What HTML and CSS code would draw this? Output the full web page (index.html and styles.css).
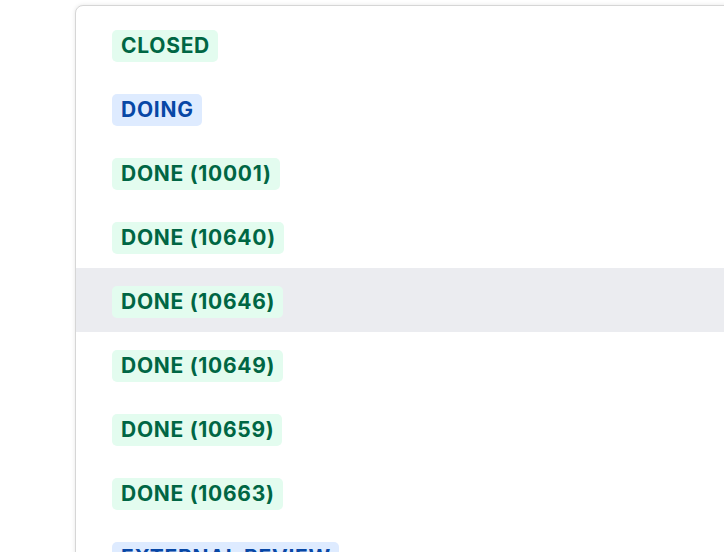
FILE: index.html
```html
<!DOCTYPE html>
<html>
<head>
<meta charset="utf-8">
<link rel="stylesheet" href="styles.css">
</head>
<body>
<div class="stage">
  <div class="panel">
    <ul class="list">
      <li class="row"><span class="lozenge green">CLOSED</span></li>
      <li class="row"><span class="lozenge blue">DOING</span></li>
      <li class="row"><span class="lozenge green">DONE (10001)</span></li>
      <li class="row"><span class="lozenge green">DONE (10640)</span></li>
      <li class="row hover"><span class="lozenge green">DONE (10646)</span></li>
      <li class="row"><span class="lozenge green">DONE (10649)</span></li>
      <li class="row"><span class="lozenge green">DONE (10659)</span></li>
      <li class="row"><span class="lozenge green">DONE (10663)</span></li>
      <li class="row"><span class="lozenge blue">EXTERNAL REVIEW</span></li>
    </ul>
  </div>
</div>
</body>
</html>
```
FILE: styles.css
```css
html, body {
  margin: 0;
  padding: 0;
  background: #fff;
  overflow: hidden;
  width: 724px;
  height: 552px;
}
.stage {
  padding: 5px 0 0 75px;
  font-family: Inter, "Noto Sans", sans-serif;
}
.panel {
  width: 720px;
  height: 700px;
  border: 1px solid #d6d6d6;
  border-radius: 8px;
  box-shadow: 0 0 4px rgba(0,0,0,0.10);
  background: #fff;
  padding-top: 6px;
}
.list {
  list-style: none;
  margin: 0;
  padding: 0;
}
.row {
  height: 64px;
  box-sizing: border-box;
  display: flex;
  align-items: center;
  padding: 4px 0 0 36px;
}
.row.hover {
  background: #ebecf0;
}
.lozenge {
  display: inline-block;
  height: 32px;
  line-height: 32px;
  padding: 0 8px 0 9px;
  border-radius: 5px;
  font-size: 21px;
  font-weight: 700;
  letter-spacing: 0.72px;
  white-space: nowrap;
  box-sizing: border-box;
}
.green {
  background: #e3fcef;
  color: #006644;
}
.blue {
  background: #deebff;
  color: #0747a6;
}
```
